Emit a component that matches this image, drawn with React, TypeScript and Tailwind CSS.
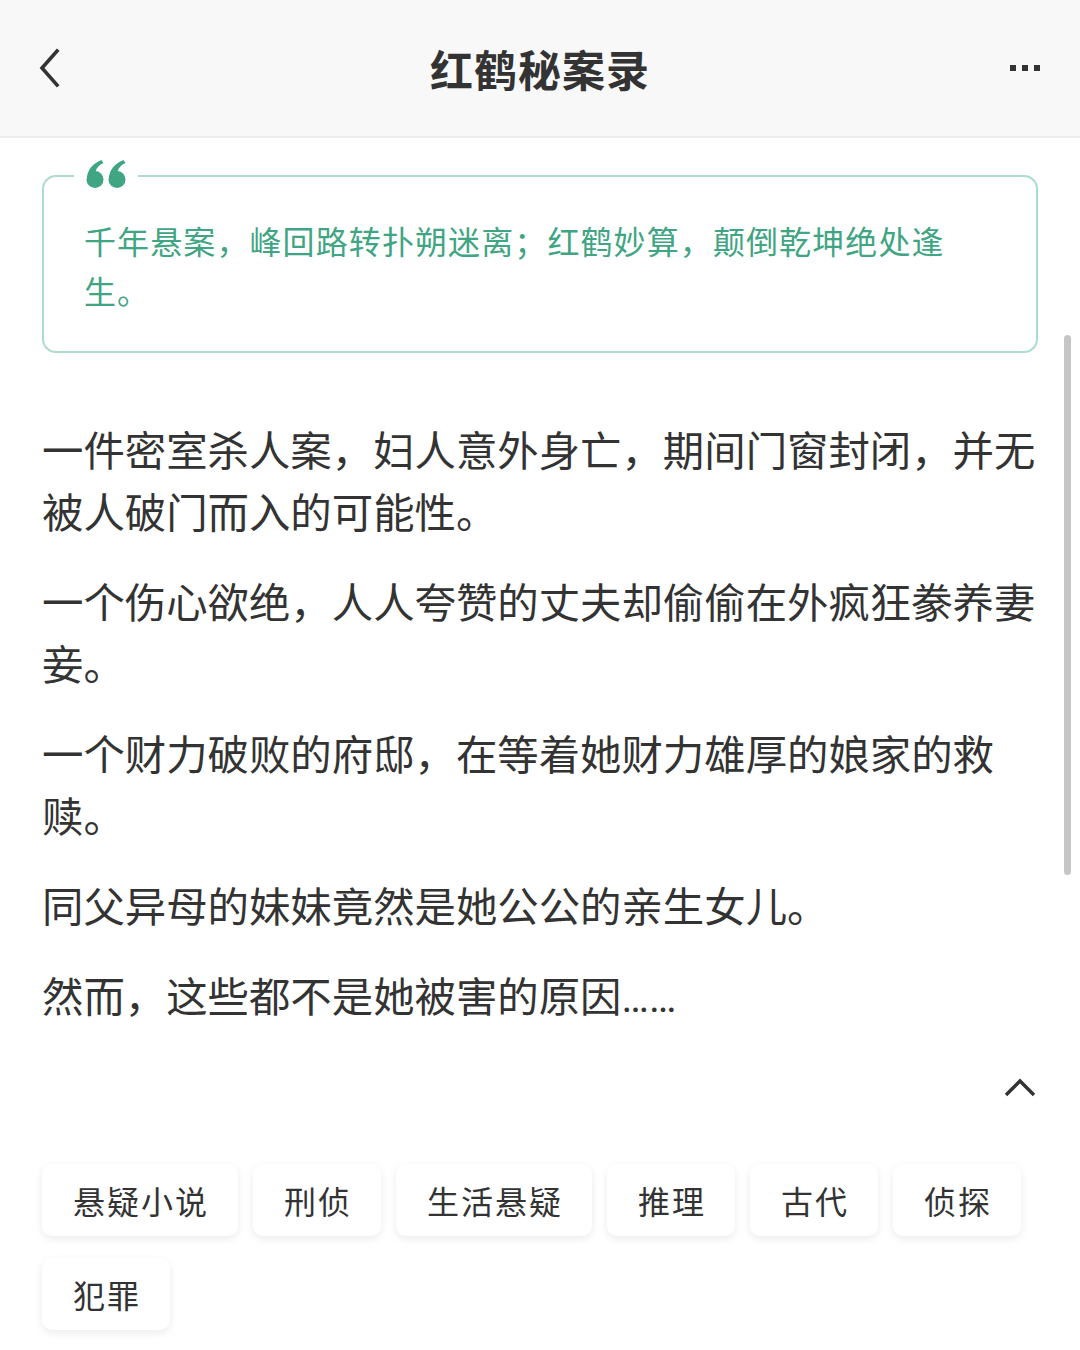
const PARAGRAPHS = [
  "一件密室杀人案，妇人意外身亡，期间门窗封闭，并无被人破门而入的可能性。",
  "一个伤心欲绝，人人夸赞的丈夫却偷偷在外疯狂豢养妻妾。",
  "一个财力破败的府邸，在等着她财力雄厚的娘家的救赎。",
  "同父异母的妹妹竟然是她公公的亲生女儿。",
];

const TAGS = ["悬疑小说", "刑侦", "生活悬疑", "推理", "古代", "侦探", "犯罪"];

function QuoteMark() {
  const mark = "M2 19C2 10 7.5 3.5 16.5 0L18.5 3C13 5.5 11 9 10.5 12.5Z";
  return (
    <svg width="44" height="30" viewBox="0 0 44 30" fill="#3fa583">
      <g transform="translate(1 1)">
        <path d={mark} />
        <circle cx="10" cy="19.5" r="8.5" />
      </g>
      <g transform="translate(23 1)">
        <path d={mark} />
        <circle cx="10" cy="19.5" r="8.5" />
      </g>
    </svg>
  );
}

export default function App() {
  return (
    <div className="relative min-h-[1350px] w-[1080px] bg-white font-['Noto_Sans_CJK_SC','Noto_Sans',sans-serif] overflow-hidden">
      <header className="h-[138px] bg-[#f8f8f8] border-b-2 border-[#ececec] grid grid-cols-[1fr_auto_1fr] items-center px-[38px]">
        <svg width="24" height="40" viewBox="0 0 24 40" fill="none" stroke="#333" strokeWidth="3.6" strokeLinecap="square">
          <path d="M19 3L4 20l15 17" />
        </svg>
        <h1 className="text-[43px] font-bold text-[#333] tracking-[1px] leading-none">红鹤秘案录</h1>
        <div className="flex gap-[6px] pr-[2px] justify-self-end">
          <span className="w-[6px] h-[6px] bg-[#333]" />
          <span className="w-[6px] h-[6px] bg-[#333]" />
          <span className="w-[6px] h-[6px] bg-[#333]" />
        </div>
      </header>

      <main className="px-[42px]">
        <section className="relative mt-[37px] border-2 border-[#acdccb] rounded-[14px] pl-[40px] pr-[50px] pt-[38px] pb-[36px]">
          <div className="absolute left-[30px] top-[-18px] bg-white px-[10px]">
            <QuoteMark />
          </div>
          <p className="text-[32px] leading-[50px] tracking-[1.1px] text-[#3fa583]">
            千年悬案，峰回路转扑朔迷离；红鹤妙算，颠倒乾坤绝处逢生。
          </p>
        </section>

        <section className="mt-[64px] flex flex-col gap-[28px]">
          {PARAGRAPHS.map((p) => (
            <p key={p} className="text-[41.4px] leading-[62px] text-[#333]">
              {p}
            </p>
          ))}
          <p className="text-[41.4px] leading-[62px] text-[#333]">
            然而，这些都不是她被害的原因
            <span className="font-['Roboto',sans-serif] text-[41px]">……</span>
          </p>
        </section>

        <div className="flex justify-end mt-[48px] pr-[2px]">
          <svg width="32" height="20" viewBox="0 0 32 20" fill="none" stroke="#333" strokeWidth="3.4">
            <path d="M2 18L16 4l14 14" />
          </svg>
        </div>

        <section className="mt-[67px] flex flex-wrap gap-x-[15px] gap-y-[22px]">
          {TAGS.map((t) => (
            <span
              key={t}
              className="h-[72px] pl-[31px] pr-[29px] flex items-center rounded-[10px] bg-white text-[32px] tracking-[2px] text-[#333] shadow-[0_3px_8px_rgba(0,0,0,0.08)]"
            >
              {t}
            </span>
          ))}
        </section>
      </main>

      <div className="absolute left-[1064px] top-[335px] w-[7px] h-[540px] rounded-full bg-[#c6c6c6]" />
    </div>
  );
}
